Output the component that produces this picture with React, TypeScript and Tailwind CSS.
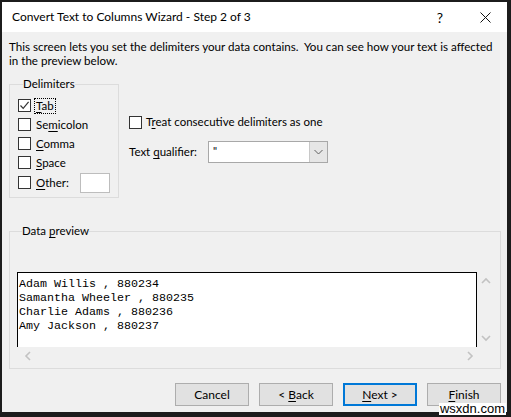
import React from "react";

const ui = { fontFamily: 'Lato, "Noto Sans", sans-serif' };
const mono = { fontFamily: '"Liberation Mono", "DejaVu Sans Mono", monospace' };

// Key letter underlined, as in Windows dialog access keys
function Key({ text, at }: { text: string; at: number }) {
  return (
    <>
      {text.slice(0, at)}
      <span className="underline underline-offset-2">{text[at]}</span>
      {text.slice(at + 1)}
    </>
  );
}

function CheckBox({ checked = false }: { checked?: boolean }) {
  return (
    <span className="flex h-[13px] w-[13px] shrink-0 items-center justify-center border border-[#333] bg-white">
      {checked && (
        <svg width="11" height="11" viewBox="0 0 11 11" fill="none" stroke="#333" strokeWidth="1.2">
          <path d="M1.5 5.5 L4.2 8.4 L9.6 1.8" />
        </svg>
      )}
    </span>
  );
}

function Chevron({ dir }: { dir: "up" | "down" | "left" | "right" }) {
  const d = {
    up: "M1 6 L5 2 L9 6",
    down: "M1 2 L5 6 L9 2",
    left: "M6 1 L2 5 L6 9",
    right: "M2 1 L6 5 L2 9",
  }[dir];
  const vert = dir === "up" || dir === "down";
  return (
    <svg width={vert ? 10 : 8} height={vert ? 8 : 10} viewBox={vert ? "0 0 10 8" : "0 0 8 10"} fill="none" stroke="#c2c2c2" strokeWidth="1.6">
      <path d={d} />
    </svg>
  );
}

function Button({ children, primary = false }: { children: React.ReactNode; primary?: boolean }) {
  return (
    <button
      className={`flex h-[23px] w-[74px] items-center justify-center bg-[#e1e1e1] text-[12px] text-black ${
        primary ? "border-2 border-[#0078d7]" : "border border-[#adadad]"
      }`}
    >
      <span>{children}</span>
    </button>
  );
}

const rows = ["Adam Willis , 880234", "Samantha Wheeler , 880235", "Charlie Adams , 880236", "Amy Jackson , 880237"];

export default function App() {
  return (
    <div className="relative h-[417px] w-[511px] bg-[#1c1c1c] pb-[5px] pl-[2px] pr-[4px] pt-[2px]" style={ui}>
      <div className="flex h-full flex-col bg-[#f0f0f0] text-[11.5px] text-black">
        {/* title bar */}
        <div className="flex h-[30px] shrink-0 items-center bg-white pl-[10px]">
          <span className="flex-1 text-[12px]">Convert Text to Columns Wizard - Step 2 of 3</span>
          <span className="w-[20px] text-center text-[14px]">?</span>
          <span className="flex w-[13px]" />
          <span className="flex w-[44px] justify-center">
            <svg width="11" height="11" viewBox="0 0 11 11" stroke="#111" strokeWidth="1">
              <path d="M0.5 0.5 L10.5 10.5 M10.5 0.5 L0.5 10.5" />
            </svg>
          </span>
        </div>

        <div className="flex flex-1 flex-col pl-[7px] pr-[6px] pt-[8px]">
          <p className="w-[485px] text-[11.6px] leading-[14px]">
            This screen lets you set the delimiters your data contains.&nbsp; You can see how your text is affected in the preview below.
          </p>

          <div className="mt-[8px] flex gap-[10px]">
            <fieldset className="w-[110px] border border-[#dcdcdc] pb-[4px] pl-[8px]">
              <legend className="ml-[5px] leading-[16px]">Delimiters</legend>
              <div className="flex flex-col pt-[4px]">
                <label className="flex h-[19px] items-center gap-[3px]">
                  <CheckBox checked />
                  <span className="border border-dotted border-black px-[1px] leading-[14px]">
                    <Key text="Tab" at={0} />
                  </span>
                </label>
                <label className="flex h-[19px] items-center gap-[5px]">
                  <CheckBox />
                  <span>
                    <Key text="Semicolon" at={2} />
                  </span>
                </label>
                <label className="flex h-[19px] items-center gap-[5px]">
                  <CheckBox />
                  <span>
                    <Key text="Comma" at={0} />
                  </span>
                </label>
                <label className="flex h-[19px] items-center gap-[5px]">
                  <CheckBox />
                  <span>
                    <Key text="Space" at={0} />
                  </span>
                </label>
                <label className="flex h-[21px] items-center gap-[5px]">
                  <CheckBox />
                  <span>
                    <Key text="Other:" at={0} />
                  </span>
                  <span className="ml-[6px] h-[20px] w-[30px] border border-[#bdbdbd] bg-white" />
                </label>
              </div>
            </fieldset>

            <div className="flex flex-col pt-[38px]">
              <label className="flex h-[16px] items-center gap-[4px]">
                <CheckBox />
                <span>
                  <Key text="Treat consecutive delimiters as one" at={1} />
                </span>
              </label>
              <div className="mt-[11px] flex items-center">
                <span className="w-[79px]">
                  Text <Key text="qualifier:" at={0} />
                </span>
                <div className="flex h-[22px] w-[120px] border border-[#a8a8a8] bg-white">
                  <span className="flex-1 pl-[4px] text-[11px] leading-[18px]">"</span>
                  <span className="flex w-[18px] items-center justify-center border-l border-[#c8c8c8] bg-[#e6e6e6]">
                    <svg width="9" height="6" viewBox="0 0 9 6" fill="none" stroke="#606060" strokeWidth="1">
                      <path d="M0.5 1 L4.5 5 L8.5 1" />
                    </svg>
                  </span>
                </div>
              </div>
            </div>
          </div>

          <fieldset className="mt-[25px] w-[492px] border border-[#dcdcdc] pb-[3px] pl-[7px] pr-[6px]">
            <legend className="ml-[5px] leading-[16px]">
              Data <Key text="preview" at={0} />
            </legend>
            <div className="mt-[33px] flex">
              <div className="flex flex-1 flex-col">
                <div className="h-[75px] border-l border-t border-r border-black bg-white pl-[1px] pt-[4px] text-[11.67px] leading-[14px]" style={mono}>
                  {rows.map((r) => (
                    <div key={r} className="whitespace-pre">
                      {r}
                    </div>
                  ))}
                </div>
                <div className="flex h-[18px] items-center justify-between pl-[7px] pr-[3px]">
                  <Chevron dir="left" />
                  <Chevron dir="right" />
                </div>
              </div>
              <div className="flex h-[75px] w-[17px] flex-col items-center justify-between py-[5px]">
                <Chevron dir="up" />
                <Chevron dir="down" />
              </div>
            </div>
          </fieldset>

          <div className="mt-[14px] flex justify-end gap-[10px]">
            <Button>Cancel</Button>
            <Button>
              &lt; <Key text="Back" at={0} />
            </Button>
            <Button primary>
              <Key text="Next" at={0} />
              &nbsp;&gt;
            </Button>
            <Button>
              <Key text="Finish" at={0} />
            </Button>
          </div>
        </div>
      </div>

      <span className="absolute bottom-[2px] right-[5px] bg-white px-[1px] text-[13px] leading-[12px] text-black" style={{ fontFamily: '"Liberation Sans", sans-serif' }}>
        wsxdn.com
      </span>
    </div>
  );
}
